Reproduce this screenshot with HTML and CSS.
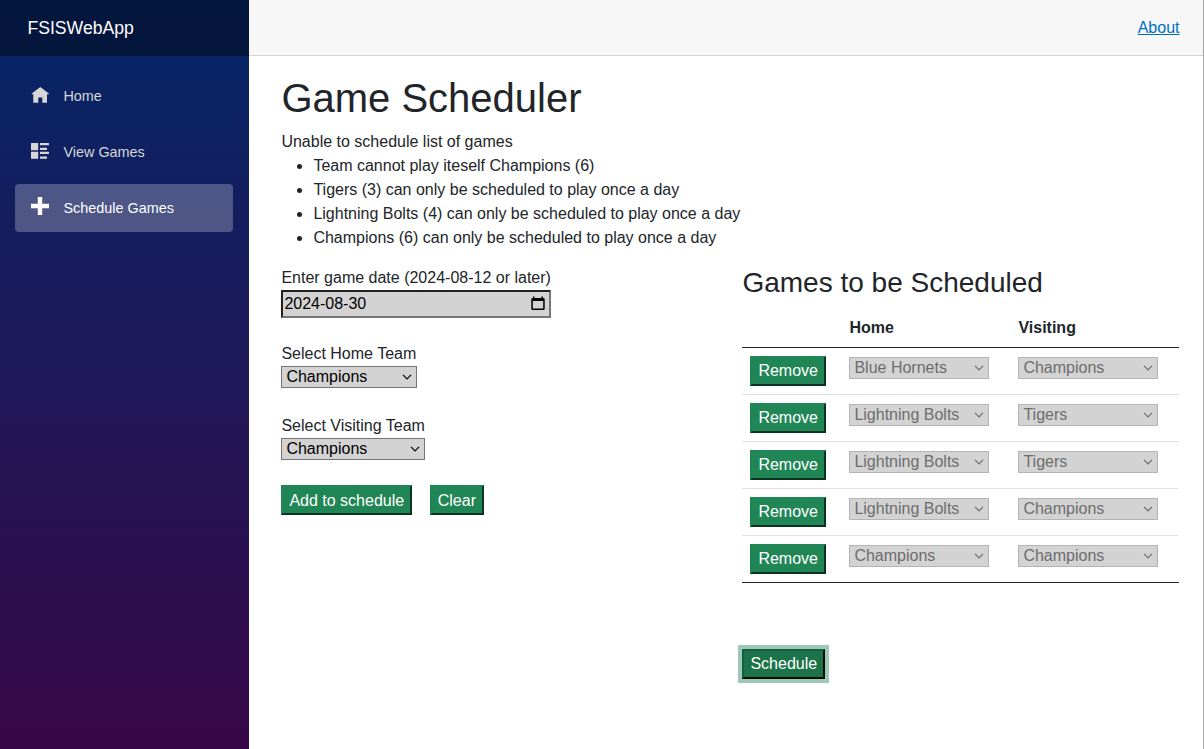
FILE: index.html
```html
<!DOCTYPE html>
<html lang="en">
<head>
<meta charset="utf-8">
<title>Game Scheduler</title>
<link rel="stylesheet" href="styles.css">
</head>
<body>
<div class="page">
  <aside class="sidebar">
    <div class="brand">FSISWebApp</div>
    <nav class="nav">
      <a class="nav-item"><svg class="icon" viewBox="0 0 18 18"><path fill="currentColor" d="M9.300 1 .8 7.500V8.300H2.300V16.700H7.300V11.500H11.300V16.700H16V8.300H17.800V7.500z"/></svg>Home</a>
      <a class="nav-item"><svg class="icon" viewBox="0 0 18 18"><path fill="currentColor" d="M0 1h7.200v7.200H0zM9 1h9v2.200H9zM9 5.800h7V8H9zM0 9.800h7.200v7H0zM9 9.800h9v2.200H9zM9 14.600h7v2.200H9z"/></svg>View Games</a>
      <a class="nav-item active"><svg class="icon plus" viewBox="0 0 18 18"><path fill="currentColor" d="M6.800 0h4.400v6.800H18v4.400h-6.800V18H6.800v-6.800H0V6.800h6.800z"/></svg>Schedule Games</a>
    </nav>
  </aside>
  <main class="main">
    <header class="topbar"><a class="about" href="#">About</a></header>
    <article class="content">
      <h1>Game Scheduler</h1>
      <div>Unable to schedule list of games</div>
      <ul class="errors">
        <li>Team cannot play iteself Champions (6)</li>
        <li>Tigers (3) can only be scheduled to play once a day</li>
        <li>Lightning Bolts (4) can only be scheduled to play once a day</li>
        <li>Champions (6) can only be scheduled to play once a day</li>
      </ul>
      <div class="columns">
        <section class="form">
          <label>Enter game date (2024-08-12 or later)</label>
          <div class="date">2024-08-30<svg width="14" height="15" viewBox="0 0 14 15"><path fill="#000" fill-rule="evenodd" d="M2 .5h1.500V2h7V.500H12V2h.5q1.200 0 1.200 1.200v9.600q0 1.200-1.200 1.200h-11Q.300 14 .300 12.800V3.200Q.300 2 1.500 2H2zM1.800 5v7.500h10.400V5z"/></svg></div>
          <label>Select Home Team</label>
          <div class="select home">Champions<svg class="chev" viewBox="0 0 10 6"><path d="M1 .8l4 4 4-4"/></svg></div>
          <label>Select Visiting Team</label>
          <div class="select visiting">Champions<svg class="chev" viewBox="0 0 10 6"><path d="M1 .8l4 4 4-4"/></svg></div>
          <div class="actions"><button class="btn">Add to schedule</button><button class="btn">Clear</button></div>
        </section>
        <section class="games">
          <h2>Games to be Scheduled</h2>
          <div class="table">
            <div class="row head"><span></span><span>Home</span><span>Visiting</span></div>
            <div class="row"><button class="btn">Remove</button><div class="select off">Blue Hornets<svg class="chev" viewBox="0 0 10 6"><path d="M1 .8l4 4 4-4"/></svg></div><div class="select off">Champions<svg class="chev" viewBox="0 0 10 6"><path d="M1 .8l4 4 4-4"/></svg></div></div>
            <div class="row"><button class="btn">Remove</button><div class="select off">Lightning Bolts<svg class="chev" viewBox="0 0 10 6"><path d="M1 .8l4 4 4-4"/></svg></div><div class="select off">Tigers<svg class="chev" viewBox="0 0 10 6"><path d="M1 .8l4 4 4-4"/></svg></div></div>
            <div class="row"><button class="btn">Remove</button><div class="select off">Lightning Bolts<svg class="chev" viewBox="0 0 10 6"><path d="M1 .8l4 4 4-4"/></svg></div><div class="select off">Tigers<svg class="chev" viewBox="0 0 10 6"><path d="M1 .8l4 4 4-4"/></svg></div></div>
            <div class="row"><button class="btn">Remove</button><div class="select off">Lightning Bolts<svg class="chev" viewBox="0 0 10 6"><path d="M1 .8l4 4 4-4"/></svg></div><div class="select off">Champions<svg class="chev" viewBox="0 0 10 6"><path d="M1 .8l4 4 4-4"/></svg></div></div>
            <div class="row last"><button class="btn">Remove</button><div class="select off">Champions<svg class="chev" viewBox="0 0 10 6"><path d="M1 .8l4 4 4-4"/></svg></div><div class="select off">Champions<svg class="chev" viewBox="0 0 10 6"><path d="M1 .8l4 4 4-4"/></svg></div></div>
          </div>
          <button class="btn focused">Schedule</button>
        </section>
      </div>
    </article>
  </main>
</div>
</body>
</html>
```
FILE: styles.css
```css
* { box-sizing: border-box; }
body { margin: 0; font: 16px/24px "Liberation Sans", Arial, sans-serif; color: #212529; background: #fff; overflow: hidden; }
.page { display: flex; height: 749px; border-right: 1px solid #a9a9a9; }
.sidebar { width: 249.4px; flex: none; background: linear-gradient(180deg, #052767 0, #3a0647 790px); }
.brand { height: 56px; padding-left: 27.5px; background: rgba(0, 0, 0, .4); color: #fff; font-size: 17.6px; line-height: 56px; }
.nav { display: flex; flex-direction: column; gap: 8px; padding: 16px 16px 0 15.4px; }
.nav-item { display: flex; align-items: center; height: 48px; padding-left: 15.4px; border-radius: 4px; color: #d7d7d7; font-size: 14.4px; }
.nav-item.active { background: rgba(255, 255, 255, .25); color: #fff; }
.icon { width: 18px; height: 18px; margin: 0 14.7px 2px 0; }
.plus { margin-bottom: 4px; }
.main { flex: 1; min-width: 0; }
.topbar { display: flex; align-items: center; justify-content: flex-end; height: 56px; padding-right: 23.5px; background: #f7f7f7; border-bottom: 1px solid #d6d5d5; }
.about { color: #0071c1; }
.content { padding: 17.6px 23.6px 0 32px; }
h1 { margin: 0 0 8px; font-size: 40px; line-height: 48px; font-weight: 400; }
h2 { margin: 0 0 8px; font-size: 28px; line-height: 33.6px; font-weight: 400; }
.errors { margin: 0 0 16px; padding-left: 32px; }
.columns { display: flex; justify-content: space-between; }
.form { width: 270px; }
label { display: block; white-space: nowrap; }
.date { display: flex; align-items: center; justify-content: space-between; width: 269.5px; height: 28px; margin-bottom: 24px; padding: 0 4px 0 1px; border: 2px inset #767676; background: #d3d3d3; color: #000; }
.select { display: flex; align-items: center; justify-content: space-between; height: 22px; padding: 1px 4px 0; border: 1px solid #767676; background: #d3d3d3; color: #000; white-space: nowrap; }
.chev { width: 10px; height: 6px; fill: none; stroke: currentColor; stroke-width: 1.2; }
.home { width: 135.5px; margin-bottom: 26px; }
.visiting { width: 143.5px; margin-bottom: 25.6px; }
.off { width: 140px; margin-top: 1px; padding-top: 0; color: #6d6d6d; border-color: #b4b4b4; }
.actions { display: flex; gap: 17.6px; }
.actions .btn { padding-top: 1px; }
.btn { height: 30px; padding: 0 6px; border: 2px outset #218656; background: #218656; color: #fff; font: inherit; white-space: nowrap; }
.games { width: 437px; }
.row { display: grid; grid-template-columns: 99px 169px 169px; align-items: start; justify-items: start; padding: 8px 0; border-bottom: 1px solid #dee2e6; }
.row > * { margin-left: 8px; }
.head { height: 41px; padding-top: 8.5px; font-weight: 700; border-color: #212529; }
.last { border-color: #212529; }
.focused { margin-top: 66px; background: #1c7349; border-color: #156043; box-shadow: 0 0 0 4px #9ecab5; }
```
